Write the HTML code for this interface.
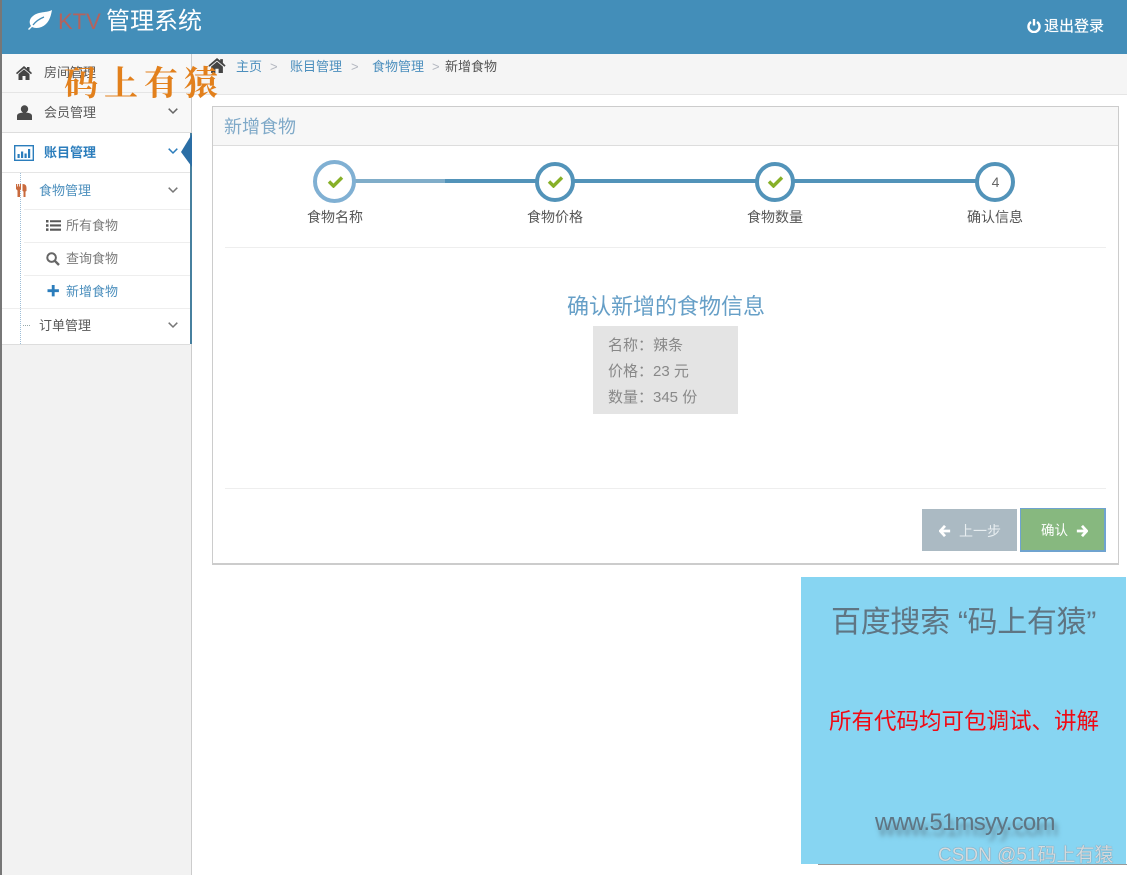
<!DOCTYPE html>
<html lang="zh"><head><meta charset="utf-8"><title>KTV 管理系统</title>
<style>
html,body{margin:0;padding:0;background:#fff}
body{width:1127px;height:875px;position:relative;overflow:hidden;font-family:"Liberation Sans","Microsoft YaHei","Noto Sans CJK SC",sans-serif;font-size:13px;color:#585858}
.a{position:absolute}
.t{position:absolute;white-space:nowrap;line-height:1}
svg{position:absolute;display:block}
</style></head><body>

<!-- header -->
<div class="a" style="left:0;top:0;width:1127px;height:54px;background:#438eb9"></div>
<div class="a" style="left:0;top:0;width:2px;height:875px;background:#777"></div>
<svg style="left:26px;top:9px" width="27" height="22" viewBox="0 0 27 22"><path d="M26 1C21 4 13 2 7 7C3 10 3 14 5 17L2 20L3 21L6 18C10 20 16 19 20 15C24 11 25 6 26 1Z" fill="#fff"/><path d="M7 16C10 12 13 10 18 8" fill="none" stroke="#438eb9" stroke-width="1.300"/></svg>
<div class="t" style="left:58px;top:11px;font-size:22px;color:#c95b4c;opacity:.85">KTV</div>
<div class="t" style="left:106px;top:10px;font-size:24px;color:#fff;letter-spacing:0">管理系统</div>
<svg style="left:1027px;top:19px" width="14" height="14" viewBox="0 0 14 14"><path d="M4 3A5.500 5.500 0 1 0 10 3" fill="none" stroke="#fff" stroke-width="2.400"/><path d="M7 0V6.500" stroke="#fff" stroke-width="2.400"/></svg>
<div class="t" style="left:1044px;top:19px;font-size:15px;color:#fff;text-shadow:0 0 .6px #fff">退出登录</div>

<!-- sidebar -->
<div class="a" style="left:2px;top:54px;width:189px;height:821px;background:#f2f2f2;border-right:1px solid #ccc"></div>
<div class="a" style="left:2px;top:54px;width:189px;height:38px;background:#f8f8f8;border-bottom:1px solid #e5e5e5"></div>
<div class="a" style="left:2px;top:93px;width:189px;height:39px;background:#f8f8f8;border-bottom:1px solid #ddd"></div>
<div class="a" style="left:2px;top:133px;width:188px;height:211px;background:#fff;border-bottom:1px solid #ddd"></div>
<div class="a" style="left:190px;top:133px;width:2px;height:211px;background:#47809f"></div>
<div class="a" style="left:2px;top:172px;width:188px;height:1px;background:#e5e5e5"></div>
<div class="a" style="left:24px;top:209px;width:166px;height:1px;background:#eee"></div>
<div class="a" style="left:24px;top:242px;width:166px;height:1px;background:#eee"></div>
<div class="a" style="left:24px;top:275px;width:166px;height:1px;background:#eee"></div>
<div class="a" style="left:2px;top:308px;width:188px;height:1px;background:#eee"></div>
<div class="a" style="left:20px;top:173px;width:0;height:171px;border-left:1px dotted #9dbdd6"></div>
<div class="a" style="left:23px;top:325px;width:7px;border-top:1px dotted #9aa"></div>
<svg style="left:181px;top:134px" width="11" height="33" viewBox="0 0 11 33"><path d="M11 0V33L0 18Z" fill="#2b6ea5"/></svg>

<svg style="left:16px;top:66px" width="16" height="14" viewBox="0 0 16 14"><path d="M8 0L11 2.500V1H13.500V4.600L16 7L15 8.200L8 2.400L1 8.200L0 7ZM2.500 8L8 3.400L13.500 8V14H9.500V10H6.500V14H2.500Z" fill="#444"/></svg>
<div class="t" style="left:44px;top:66px">房间管理</div>
<svg style="left:17px;top:105px" width="15" height="15" viewBox="0 0 15 15"><circle cx="7.500" cy="4" r="3.700" fill="#4a4a4a"/><path d="M0 15V11C0 8.500 3 7.500 7.500 7.500S15 8.500 15 11V15Z" fill="#4a4a4a"/></svg>
<div class="t" style="left:44px;top:106px">会员管理</div>
<svg style="left:14px;top:145px" width="20" height="16" viewBox="0 0 20 16"><rect x=".7" y=".7" width="18.600" height="14.600" fill="none" stroke="#2b7dbc" stroke-width="1.400"/><path d="M3.500 9h2.200v4H3.500zM7 6.500h2.200V13H7zM10.500 8.500h2.200V13h-2.200zM14 4h2.200v9H14z" fill="#2b7dbc"/></svg>
<div class="t" style="left:44px;top:146px;color:#2b7dbc;font-weight:bold">账目管理</div>
<svg style="left:16px;top:184px" width="11" height="13" viewBox="0 0 11 13"><path d="M0 0H1.200V2.500H2V0H3V2.500H3.800V0H5V5L4 6.500V13H1.500V6.500L0 5ZM6.500 0C9.500 0 10.500 1.500 10.500 4V7L9.500 7.500V13H7.500V7.500L6.500 7Z" fill="#c96a3d"/></svg>
<div class="t" style="left:39px;top:184px;color:#4c8fbd">食物管理</div>
<svg style="left:46px;top:220px" width="15" height="11" viewBox="0 0 15 11"><path d="M0 0h2.500v2.500H0zM0 4.200h2.500v2.500H0zM0 8.400h2.500v2.500H0zM4 .2h11v2.100H4zM4 4.400h11v2.100H4zM4 8.600h11v2.100H4z" fill="#585858"/></svg>
<div class="t" style="left:66px;top:219px;color:#7b7b7b">所有食物</div>
<svg style="left:46px;top:252px" width="14" height="14" viewBox="0 0 14 14"><circle cx="5.600" cy="5.600" r="4.300" fill="none" stroke="#666" stroke-width="2"/><path d="M8.800 8.800L13 13" stroke="#666" stroke-width="2.400"/></svg>
<div class="t" style="left:66px;top:252px;color:#7b7b7b">查询食物</div>
<svg style="left:47px;top:285px" width="12" height="12" viewBox="0 0 12 12"><path d="M4.500 0h3v4.500H12v3H7.500V12h-3V7.500H0v-3h4.500z" fill="#2b7dbc" transform="translate(.5 0) scale(.95)"/></svg>
<div class="t" style="left:66px;top:285px;color:#4c8fbd">新增食物</div>
<div class="t" style="left:39px;top:319px;color:#585858">订单管理</div>
<svg style="left:168px;top:108px" width="10" height="7" viewBox="0 0 10 7"><path d="M.7 .7L5 5L9.300 .7" fill="none" stroke="#666" stroke-width="1.500"/></svg>
<svg style="left:168px;top:148px" width="10" height="7" viewBox="0 0 10 7"><path d="M.7 .7L5 5L9.300 .7" fill="none" stroke="#2b7dbc" stroke-width="1.500"/></svg>
<svg style="left:168px;top:187px" width="10" height="7" viewBox="0 0 10 7"><path d="M.7 .7L5 5L9.300 .7" fill="none" stroke="#777" stroke-width="1.500"/></svg>
<svg style="left:168px;top:322px" width="10" height="7" viewBox="0 0 10 7"><path d="M.7 .7L5 5L9.300 .7" fill="none" stroke="#777" stroke-width="1.500"/></svg>

<!-- breadcrumbs -->
<div class="a" style="left:192px;top:54px;width:935px;height:40px;background:#f5f5f5;border-bottom:1px solid #e5e5e5"></div>
<svg style="left:208px;top:58px" width="18" height="15" viewBox="0 0 16 14"><path d="M8 0L11 2.500V1H13.500V4.600L16 7L15 8.200L8 2.400L1 8.200L0 7ZM2.500 8L8 3.400L13.500 8V14H9.500V10H6.500V14H2.500Z" fill="#444"/></svg>
<div class="t" style="left:236px;top:60px;color:#4c8fbd">主页</div>
<div class="t" style="left:270px;top:60px;color:#b2b6bf">&gt;</div>
<div class="t" style="left:290px;top:60px;color:#4c8fbd">账目管理</div>
<div class="t" style="left:351px;top:60px;color:#b2b6bf">&gt;</div>
<div class="t" style="left:372px;top:60px;color:#4c8fbd">食物管理</div>
<div class="t" style="left:432px;top:60px;color:#b2b6bf">&gt;</div>
<div class="t" style="left:445px;top:60px;color:#555">新增食物</div>

<!-- widget -->
<div class="a" style="left:212px;top:106px;width:905px;height:456px;background:#fff;border:1px solid #ccc;border-bottom:2px solid #ccc"></div>
<div class="a" style="left:213px;top:107px;width:905px;height:38px;background:#f7f7f7;border-bottom:1px solid #ddd"></div>
<div class="t" style="left:224px;top:118px;font-size:18px;color:#7fa9c8">新增食物</div>

<!-- steps -->
<div class="a" style="left:335px;top:179px;width:110px;height:4px;background:#80adc9"></div>
<div class="a" style="left:445px;top:179px;width:550px;height:4px;background:#5293b9"></div>
<div class="a" style="left:313px;top:160px;width:35px;height:35px;border:4px solid #80b0d3;border-radius:50%;background:#fff"></div>
<div class="a" style="left:535px;top:162px;width:32px;height:32px;border:4px solid #5293b9;border-radius:50%;background:#fff"></div>
<div class="a" style="left:755px;top:162px;width:32px;height:32px;border:4px solid #5293b9;border-radius:50%;background:#fff"></div>
<div class="a" style="left:975px;top:162px;width:32px;height:32px;border:4px solid #5293b9;border-radius:50%;background:#fff"></div>
<svg style="left:327px;top:175px" width="17" height="13" viewBox="0 0 17 13"><path d="M2 6.500L6.500 11L15 2.500" fill="none" stroke="#87b028" stroke-width="3.400"/></svg>
<svg style="left:547px;top:175px" width="17" height="13" viewBox="0 0 17 13"><path d="M2 6.500L6.500 11L15 2.500" fill="none" stroke="#87b028" stroke-width="3.400"/></svg>
<svg style="left:767px;top:175px" width="17" height="13" viewBox="0 0 17 13"><path d="M2 6.500L6.500 11L15 2.500" fill="none" stroke="#87b028" stroke-width="3.400"/></svg>
<div class="t" style="left:975px;top:175px;width:41px;text-align:center;font-size:14px;color:#666">4</div>
<div class="t" style="left:307px;top:210px;font-size:14px;color:#555">食物名称</div>
<div class="t" style="left:527px;top:210px;font-size:14px;color:#555">食物价格</div>
<div class="t" style="left:747px;top:210px;font-size:14px;color:#555">食物数量</div>
<div class="t" style="left:967px;top:210px;font-size:14px;color:#555">确认信息</div>
<div class="a" style="left:225px;top:247px;width:881px;height:1px;background:#eee"></div>

<!-- content -->
<div class="t" style="left:567px;top:296px;font-size:22px;color:#669fc7">确认新增的食物信息</div>
<div class="a" style="left:593px;top:326px;width:145px;height:88px;background:#e4e4e4"></div>
<div class="t" style="left:608px;top:338px;font-size:15px;color:#888">名称：辣条</div>
<div class="t" style="left:608px;top:364px;font-size:15px;color:#888">价格：23 元</div>
<div class="t" style="left:608px;top:390px;font-size:15px;color:#888">数量：345 份</div>
<div class="a" style="left:225px;top:488px;width:881px;height:1px;background:#eee"></div>

<!-- buttons -->
<div class="a" style="left:922px;top:509px;width:95px;height:42px;background:#abbac3"></div>
<svg style="left:939px;top:525px" width="12" height="12" viewBox="0 0 14 14"><path d="M7 1L1.500 7L7 13M2 7H13" fill="none" stroke="#fff" stroke-width="3.200"/></svg>
<div class="t" style="left:959px;top:524px;font-size:14px;color:#e8eef1">上一步</div>
<div class="a" style="left:1020px;top:508px;width:83px;height:41px;background:#87b87f;border:1px solid #6fa3cf;border-width:1px 2px 2px 1px"></div>
<div class="t" style="left:1041px;top:524px;font-size:13.500px;color:#fff">确认</div>
<svg style="left:1076px;top:525px" width="12" height="12" viewBox="0 0 14 14"><path d="M7 1L12.500 7L7 13M12 7H1" fill="none" stroke="#fff" stroke-width="3.200"/></svg>

<!-- promo -->
<div class="a" style="left:801px;top:577px;width:325px;height:287px;background:#87d5f2"></div>
<div class="a" style="left:818px;top:864px;width:309px;height:1px;background:#999"></div>
<div class="t" style="left:831px;top:608px;font-size:30px;letter-spacing:-.3px;color:#5f7583">百度搜索 “码上有猿”</div>
<div class="t" style="left:829px;top:711px;font-size:22.500px;color:#f00a14">所有代码均可包调试、讲解</div>
<div class="t" style="left:875px;top:811px;font-size:24px;letter-spacing:-.75px;color:#5f7583;text-shadow:3px 6px 5px rgba(70,80,90,.55)">www.51msyy.com</div>
<div class="t" style="left:938px;top:846px;font-size:19px;color:#d4dadd;text-shadow:0 0 1px #667">CSDN @51码上有猿</div>

<!-- watermark -->
<div class="t" style="left:64px;top:64px;font-size:34px;font-family:'Noto Serif CJK SC',serif;font-weight:bold;color:#e2801c;letter-spacing:6px">码上有猿</div>

</body></html>
